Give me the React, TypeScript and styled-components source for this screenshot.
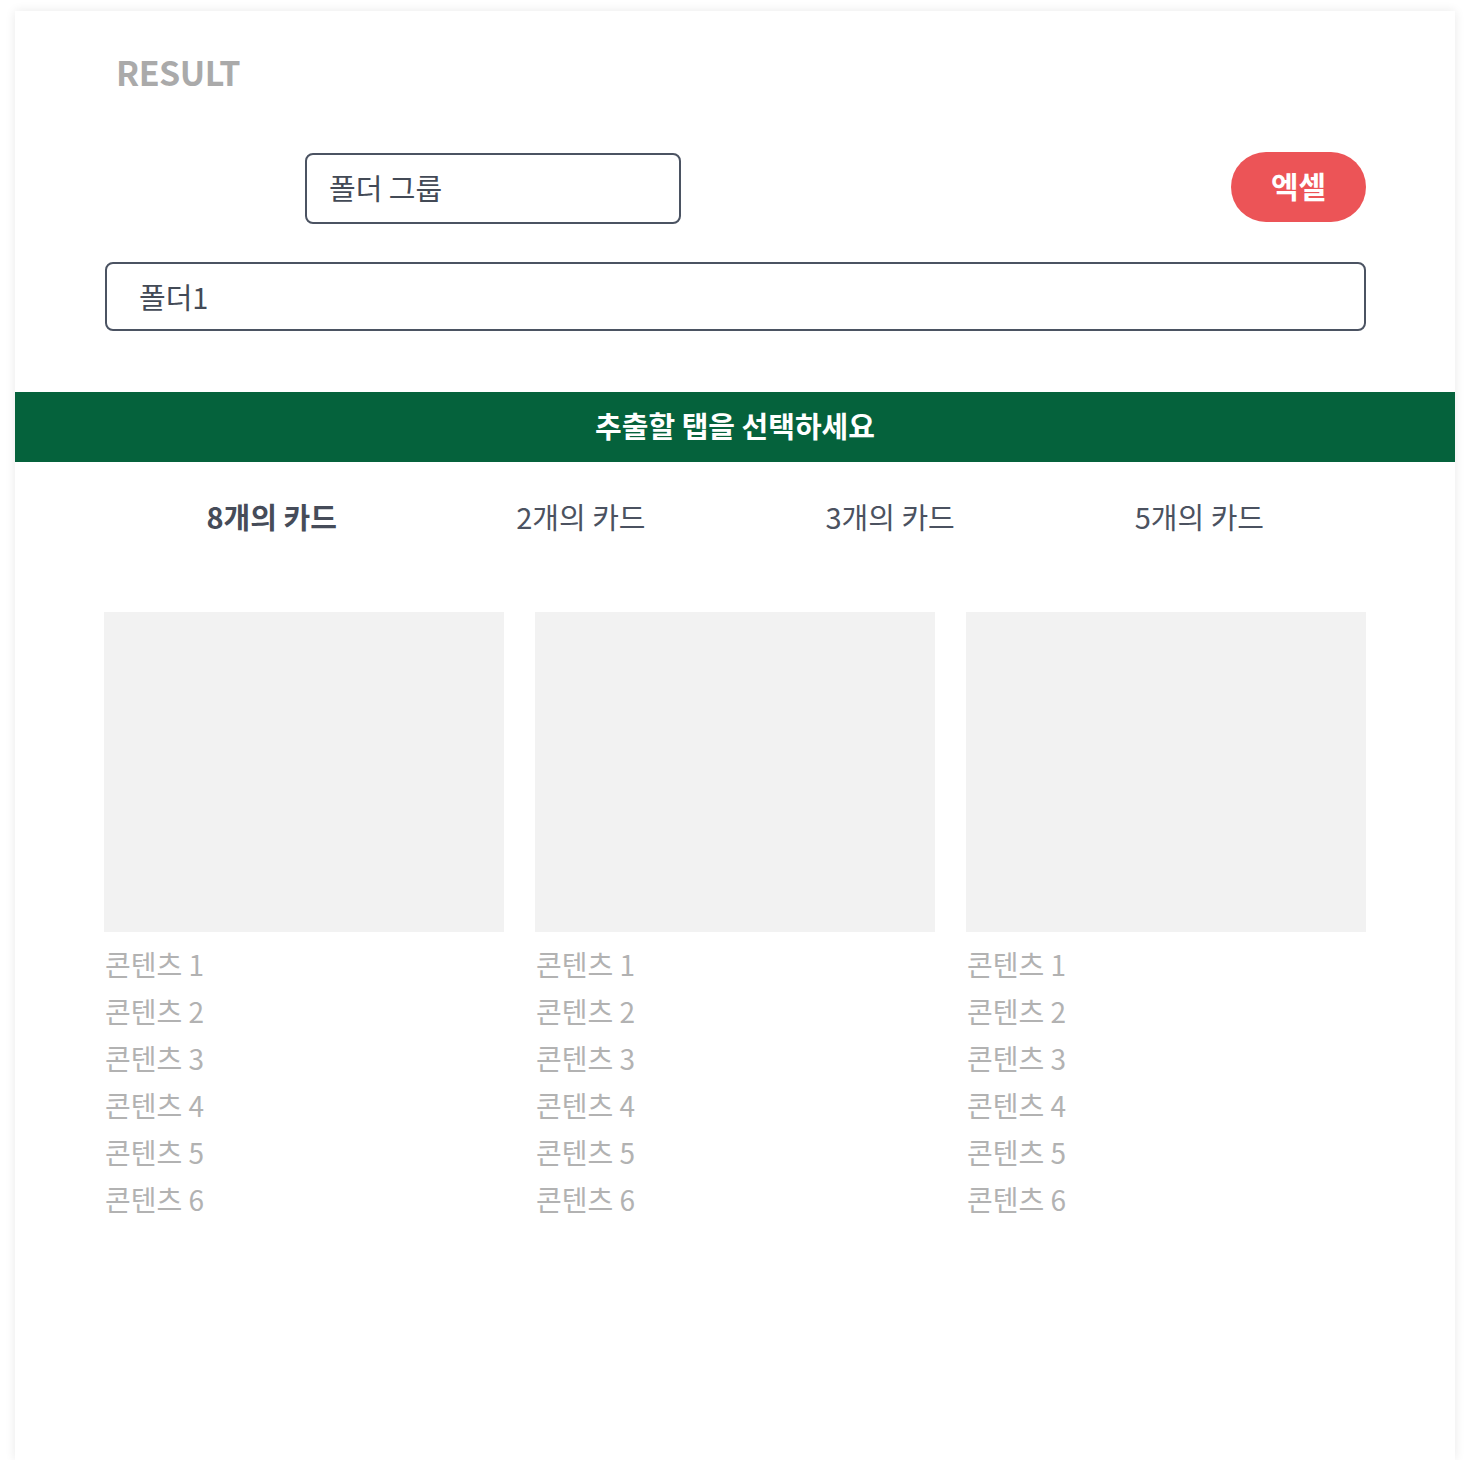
import React from "react";
import styled, { createGlobalStyle } from "styled-components";

const GlobalStyle = createGlobalStyle`
  html, body {
    margin: 0;
    padding: 0;
    background: #ffffff;
  }
  body {
    font-family: "Noto Sans CJK KR", "Noto Sans", sans-serif;
  }
  * { box-sizing: border-box; }
`;

const Frame = styled.div`
  margin: 11px 15px 0;
  width: 1440px;
  height: 1449px;
  background: #ffffff;
  box-shadow: 0 0 10px rgba(0, 0, 0, 0.09);
  display: flex;
  flex-direction: column;
`;

const Content = styled.div`
  padding: 0 89px 0 90px;
  display: flex;
  flex-direction: column;
`;

const Title = styled.h1`
  margin: 39px 0 0;
  padding-left: 11px;
  font-size: 34px;
  line-height: 44px;
  font-weight: 700;
  color: #aaaaaa;
  letter-spacing: -0.5px;
`;

const TopRow = styled.div`
  margin-top: 58px;
  height: 72px;
  display: flex;
  align-items: center;
  justify-content: space-between;
`;

const Field = styled.div<{ $wide?: boolean }>`
  width: ${(p) => (p.$wide ? "100%" : "376px")};
  height: ${(p) => (p.$wide ? "69px" : "71px")};
  margin-left: ${(p) => (p.$wide ? "0" : "200px")};
  padding-left: ${(p) => (p.$wide ? "32px" : "22px")};
  padding-bottom: 2px;
  border: 2px solid #4b5362;
  border-radius: 8px;
  display: flex;
  align-items: center;
  font-size: 29px;
  color: #434a56;
`;

const ExcelButton = styled.button`
  width: 135px;
  height: 70px;
  margin-top: -3px;
  border: none;
  border-radius: 35px;
  background: #ec5457;
  color: #ffffff;
  font-family: "Noto Sans CJK KR", "Noto Sans", sans-serif;
  font-size: 30px;
  font-weight: 700;
  padding: 0 0 4px;
  cursor: pointer;
`;

const FolderRow = styled.div`
  margin-top: 38px;
`;

const Banner = styled.div`
  margin-top: 61px;
  height: 70px;
  background: #05623c;
  color: #ffffff;
  display: flex;
  align-items: center;
  justify-content: center;
  font-size: 29px;
  font-weight: 700;
  padding-bottom: 4px;
`;

const Tabs = styled.div`
  margin: 0 12px;
  height: 110px;
  display: grid;
  grid-template-columns: repeat(4, 1fr);
  align-items: center;
`;

const Tab = styled.div<{ $active?: boolean }>`
  text-align: center;
  font-size: 29px;
  font-weight: ${(p) => (p.$active ? 700 : 400)};
  color: ${(p) => (p.$active ? "#464c59" : "#4b5260")};
  padding-bottom: 3px;
  cursor: pointer;
`;

const Cards = styled.div`
  margin-top: 40px;
  display: grid;
  grid-template-columns: repeat(3, 1fr);
  column-gap: 31px;
  margin-left: -1px;
`;

const Card = styled.div`
  display: flex;
  flex-direction: column;
`;

const Thumb = styled.div`
  height: 320px;
  background: #f2f2f2;
`;

const Lines = styled.ul`
  list-style: none;
  margin: 9px 0 0;
  padding: 0 0 0 1px;
`;

const Line = styled.li`
  font-size: 28px;
  line-height: 47px;
  color: #b2b2b2;
`;

const tabs = ["8개의 카드", "2개의 카드", "3개의 카드", "5개의 카드"];
const items = [1, 2, 3, 4, 5, 6];

export default function App() {
  return (
    <>
      <GlobalStyle />
      <Frame>
        <Content>
          <Title>RESULT</Title>
          <TopRow>
            <Field>폴더 그룹</Field>
            <ExcelButton>엑셀</ExcelButton>
          </TopRow>
          <FolderRow>
            <Field $wide>폴더1</Field>
          </FolderRow>
        </Content>
        <Banner>추출할 탭을 선택하세요</Banner>
        <Content>
          <Tabs>
            {tabs.map((t, i) => (
              <Tab key={t} $active={i === 0}>
                {t}
              </Tab>
            ))}
          </Tabs>
          <Cards>
            {[0, 1, 2].map((c) => (
              <Card key={c}>
                <Thumb />
                <Lines>
                  {items.map((n) => (
                    <Line key={n}>콘텐츠 {n}</Line>
                  ))}
                </Lines>
              </Card>
            ))}
          </Cards>
        </Content>
      </Frame>
    </>
  );
}
